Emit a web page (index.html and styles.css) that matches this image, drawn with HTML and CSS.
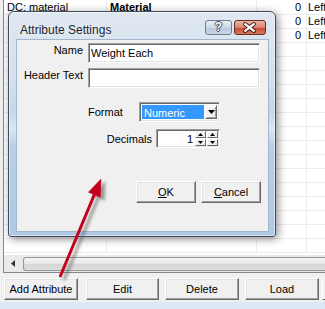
FILE: index.html
```html
<!DOCTYPE html>
<html>
<head>
<meta charset="utf-8">
<link rel="stylesheet" href="styles.css">
</head>
<body>
<div class="list">
  <div class="rows">
    <div class="row"><div class="c c1">DC: material</div><div class="c c2 bold">Material</div><div class="c c3">0</div><div class="c c4">Left</div></div>
    <div class="row"><div class="c c1"></div><div class="c c2"></div><div class="c c3">0</div><div class="c c4">Left</div></div>
    <div class="row"><div class="c c1"></div><div class="c c2"></div><div class="c c3">0</div><div class="c c4">Left</div></div>
    <div class="row"><div class="c c1"></div><div class="c c2"></div><div class="c c3"></div><div class="c c4"></div></div>
    <div class="row"><div class="c c1"></div><div class="c c2"></div><div class="c c3"></div><div class="c c4"></div></div>
    <div class="row"><div class="c c1"></div><div class="c c2"></div><div class="c c3"></div><div class="c c4"></div></div>
    <div class="row"><div class="c c1"></div><div class="c c2"></div><div class="c c3"></div><div class="c c4"></div></div>
    <div class="row"><div class="c c1"></div><div class="c c2"></div><div class="c c3"></div><div class="c c4"></div></div>
    <div class="row"><div class="c c1"></div><div class="c c2"></div><div class="c c3"></div><div class="c c4"></div></div>
    <div class="row"><div class="c c1"></div><div class="c c2"></div><div class="c c3"></div><div class="c c4"></div></div>
    <div class="row"><div class="c c1"></div><div class="c c2"></div><div class="c c3"></div><div class="c c4"></div></div>
    <div class="row"><div class="c c1"></div><div class="c c2"></div><div class="c c3"></div><div class="c c4"></div></div>
    <div class="row"><div class="c c1"></div><div class="c c2"></div><div class="c c3"></div><div class="c c4"></div></div>
    <div class="row"><div class="c c1"></div><div class="c c2"></div><div class="c c3"></div><div class="c c4"></div></div>
    <div class="row"><div class="c c1"></div><div class="c c2"></div><div class="c c3"></div><div class="c c4"></div></div>
    <div class="row"><div class="c c1"></div><div class="c c2"></div><div class="c c3"></div><div class="c c4"></div></div>
    <div class="row"><div class="c c1"></div><div class="c c2"></div><div class="c c3"></div><div class="c c4"></div></div>
    <div class="row"><div class="c c1"></div><div class="c c2"></div><div class="c c3"></div><div class="c c4"></div></div>
  </div>
  <div class="hscroll">
    <div class="sarrow"><svg width="4" height="7" viewBox="0 0 4 7"><polygon points="4,0 4,7 0,3.5" fill="#333"/></svg></div>
    <div class="thumb"></div>
  </div>
</div>
<div class="bar">
  <div class="btn w1">Add Attribute</div>
  <div class="btn w2">Edit</div>
  <div class="btn w3">Delete</div>
  <div class="btn w4">Load</div>
  <div class="btn w5"></div>
</div>
<div class="strip"></div>

<div class="dialog">
  <div class="titlebar">
    <span class="title">Attribute Settings</span>
    <div class="tbtns">
      <div class="help">?</div>
      <div class="close"><svg width="32" height="15" viewBox="0 0 32 15"><path d="M11.5 4 L20.5 11 M20.5 4 L11.5 11" stroke="#4b2118" stroke-width="4.2" stroke-linecap="round"/><path d="M11.5 4 L20.5 11 M20.5 4 L11.5 11" stroke="#fff" stroke-width="2.2" stroke-linecap="round"/></svg></div>
    </div>
  </div>
  <div class="client">
    <div class="frow r1"><span class="lbl l1">Name</span><div class="edit wide">Weight Each</div></div>
    <div class="frow r2"><span class="lbl l1">Header Text</span><div class="edit wide"></div></div>
    <div class="frow r3"><span class="lbl l3">Format</span>
      <div class="edit combo"><span class="sel">Numeric</span><span class="ddbtn"><svg width="7" height="4" viewBox="0 0 7 4"><polygon points="0,0 7,0 3.5,4" fill="#000"/></svg></span></div>
    </div>
    <div class="frow r4"><span class="lbl l4">Decimals</span>
      <div class="edit spin"><span class="val">1</span>
        <span class="spcol"><span class="sb"><svg width="5" height="3" viewBox="0 0 5 3"><polygon points="2.5,0 5,3 0,3" fill="#000"/></svg></span><span class="sb"><svg width="5" height="3" viewBox="0 0 5 3"><polygon points="0,0 5,0 2.5,3" fill="#000"/></svg></span></span>
        <span class="spcol"><span class="sb"><svg width="5" height="3" viewBox="0 0 5 3"><polygon points="2.5,0 5,3 0,3" fill="#000"/></svg></span><span class="sb"><svg width="5" height="3" viewBox="0 0 5 3"><polygon points="0,0 5,0 2.5,3" fill="#000"/></svg></span></span>
      </div>
    </div>
    <div class="frow r5"><div class="btn dbtn"><u>O</u>K</div><div class="btn dbtn"><u>C</u>ancel</div></div>
  </div>
</div>

<svg class="arrow" width="325" height="309" viewBox="0 0 325 309">
  <defs><filter id="sh" x="-50%" y="-50%" width="200%" height="200%"><feGaussianBlur stdDeviation="1.6"/></filter></defs>
  <g transform="translate(4,3)" fill="#555" stroke="#555" opacity="0.55" filter="url(#sh)">
    <line x1="60" y1="277" x2="95" y2="193" stroke-width="3.2"/>
    <polygon points="101,179 100.4,197.2 88.4,192.2"/>
  </g>
  <g fill="#c5001c" stroke="#c5001c">
    <line x1="60" y1="277" x2="95" y2="193" stroke-width="3"/>
    <polygon points="101,179 100.4,197.2 88.4,192.2" stroke-width="0.5"/>
  </g>
</svg>
</body>
</html>
```

FILE: styles.css
```css
html { overflow: hidden; }
body {
  margin: 0;
  width: 325px;
  height: 309px;
  overflow: hidden;
  position: relative;
  background: #f0f0f0;
  font-family: "Liberation Sans", Arial, sans-serif;
  font-size: 11px;
  color: #000;
}

.list {
  margin-left: 3px;
  width: 322px;
  height: 273px;
  box-sizing: border-box;
  border-left: 1px solid #828790;
  border-bottom: 1px solid #828790;
  background: #fff;
  display: flex;
  flex-direction: column;
  overflow: hidden;
}
.rows {
  height: 255px;
  overflow: hidden;
  padding-top: 1px;
  box-sizing: border-box;
}
.row {
  display: flex;
  height: 14px;
  box-sizing: border-box;
  border-bottom: 1px solid #ececec;
}
.c {
  box-sizing: border-box;
  border-right: 1px solid #ececec;
  line-height: 13px;
  white-space: nowrap;
  overflow: hidden;
  flex-shrink: 0;
}
.c1 { width: 103px; padding-left: 3px; }
.c2 { width: 150px; padding-left: 3px; }
.c3 { width: 50px; text-align: right; padding-right: 5px; }
.c4 { flex: 1; flex-shrink: 1; min-width: 0; padding-left: 1px; border-right: 0; text-overflow: clip; }
.bold { font-weight: bold; }

.hscroll {
  height: 17px;
  display: flex;
  background: #eaeaea;
}
.sarrow {
  width: 17px;
  display: flex;
  align-items: center;
  justify-content: center;
}
.thumb {
  flex: 1;
  margin: 2px 0 1px 2px;
  border: 1px solid #979797;
  border-right: 0;
  border-radius: 3px 0 0 3px;
  background: linear-gradient(#f4f4f4, #e6e6e6 50%, #d6d6d6 51%, #dedede);
}

.bar {
  display: flex;
  margin-top: 5px;
  padding-left: 4px;
  height: 22px;
  overflow: hidden;
}
.btn {
  box-sizing: border-box;
  height: 22px;
  display: flex;
  align-items: center;
  justify-content: center;
  background: #f0f0f0;
  border: 1px solid;
  border-color: #fff #696969 #696969 #fff;
  box-shadow: inset -1px -1px #a0a0a0, inset 1px 1px #e3e3e3;
  white-space: nowrap;
  flex-shrink: 0;
}
.w1 { width: 74px; margin-right: 8px; }
.w2 { width: 73px; margin-right: 6px; }
.w3 { width: 74px; margin-right: 6px; }
.w4 { width: 74px; margin-right: 3px; }
.w5 { width: 3px; border-right: 0; box-shadow: none; }

.strip {
  margin-top: 2px;
  height: 7px;
  background: #dde8f4;
}

.dialog {
  position: absolute;
  left: 8px;
  top: 11px;
  width: 268px;
  height: 226px;
  box-sizing: border-box;
  border: 1px solid #3d4b5a;
  border-radius: 6px 6px 3px 3px;
  background: linear-gradient(180deg, #dfe8f1 0%, #d5e0ec 30%, #c3d6ea 44%, #dae6f2 52%, #b9cfe7 60%, #afc8e4 100%);
  box-shadow: 2px 2px 8px rgba(0,0,0,0.45), inset 0 0 0 1px rgba(255,255,255,0.5);
  display: flex;
  flex-direction: column;
  padding: 0 6px 4px 7px;
}
.titlebar {
  height: 27px;
  display: flex;
  align-items: flex-start;
}
.title {
  padding: 11px 0 0 4px;
  font-size: 12px;
  line-height: 14px;
  color: #1b2633;
  text-shadow: 0 0 6px rgba(255,255,255,0.9);
}
.tbtns {
  margin-left: auto;
  margin-top: 8px;
  margin-right: 3px;
  display: flex;
  gap: 2px;
}
.help {
  width: 27px;
  height: 15px;
  box-sizing: border-box;
  border: 1px solid #6c7e94;
  border-radius: 3px;
  background: linear-gradient(#e8eef5, #cdd9e6 50%, #b6c7db 51%, #c8d7e7);
  color: #fff;
  font-weight: bold;
  font-size: 12px;
  line-height: 13px;
  text-align: center;
  text-shadow: 1px 0 #3c4d62, -1px 0 #3c4d62, 0 1px #3c4d62, 0 -1px #3c4d62;
}
.close {
  width: 32px;
  height: 15px;
  box-sizing: border-box;
  border: 1px solid #6a2a1e;
  border-radius: 3px;
  background: linear-gradient(#eab3a6, #d98672 50%, #c5492f 51%, #d47a5e);
  display: flex;
}
.close svg { margin-left: -1px; margin-top: -1px; }

.client {
  flex: 1;
  box-sizing: border-box;
  border: 1px solid #a2b5ca;
  background: #f0f0f0;
  padding-top: 3px;
}
.frow { display: flex; align-items: flex-start; }
.lbl { line-height: 14px; white-space: nowrap; }
.l1 { width: 66px; text-align: right; margin-right: 5px; }
.r2 { margin-top: 5px; }
.r3 { margin-top: 14px; padding-left: 71px; align-items: center; }
.l3 { width: 51px; }
.r4 { margin-top: 7px; align-items: center; }
.l4 { width: 135px; text-align: right; margin-right: 4px; }
.r5 { margin-top: 33px; padding-left: 119px; gap: 5px; }

.edit {
  box-sizing: border-box;
  background: #fff;
  border: 1px solid;
  border-color: #a0a0a0 #fff #fff #a0a0a0;
  box-shadow: inset 1px 1px #696969, inset -1px -1px #e3e3e3;
}
.wide {
  width: 172px;
  height: 20px;
  padding: 2px 0 0 2px;
  line-height: 14px;
  font-size: 11px;
}
.combo {
  width: 81px;
  height: 20px;
  padding: 2px;
  display: flex;
  gap: 1px;
}
.sel {
  width: 62px;
  background: #3399ff;
  color: #fff;
  line-height: 16px;
  padding-left: 2px;
  box-sizing: border-box;
}
.ddbtn {
  flex: 1;
  box-sizing: border-box;
  background: #f0f0f0;
  border: 1px solid;
  border-color: #f0f0f0 #696969 #696969 #f0f0f0;
  box-shadow: inset 1px 1px #fff, inset -1px -1px #a0a0a0;
  display: flex;
  align-items: center;
  justify-content: center;
}
.spin {
  width: 64px;
  height: 19px;
  padding: 1px 1px 1px 2px;
  display: flex;
}
.val {
  flex: 1;
  text-align: right;
  padding-right: 1px;
  line-height: 16px;
}
.spcol {
  width: 11px;
  margin-left: 1px;
  display: flex;
  flex-direction: column;
  gap: 1px;
}
.sb {
  flex: 1;
  box-sizing: border-box;
  background: #f0f0f0;
  border: 1px solid;
  border-color: #fff #696969 #696969 #fff;
  display: flex;
  align-items: center;
  justify-content: center;
}
.dbtn {
  width: 60px;
}

.arrow {
  position: absolute;
  left: 0;
  top: 0;
  pointer-events: none;
}
```
